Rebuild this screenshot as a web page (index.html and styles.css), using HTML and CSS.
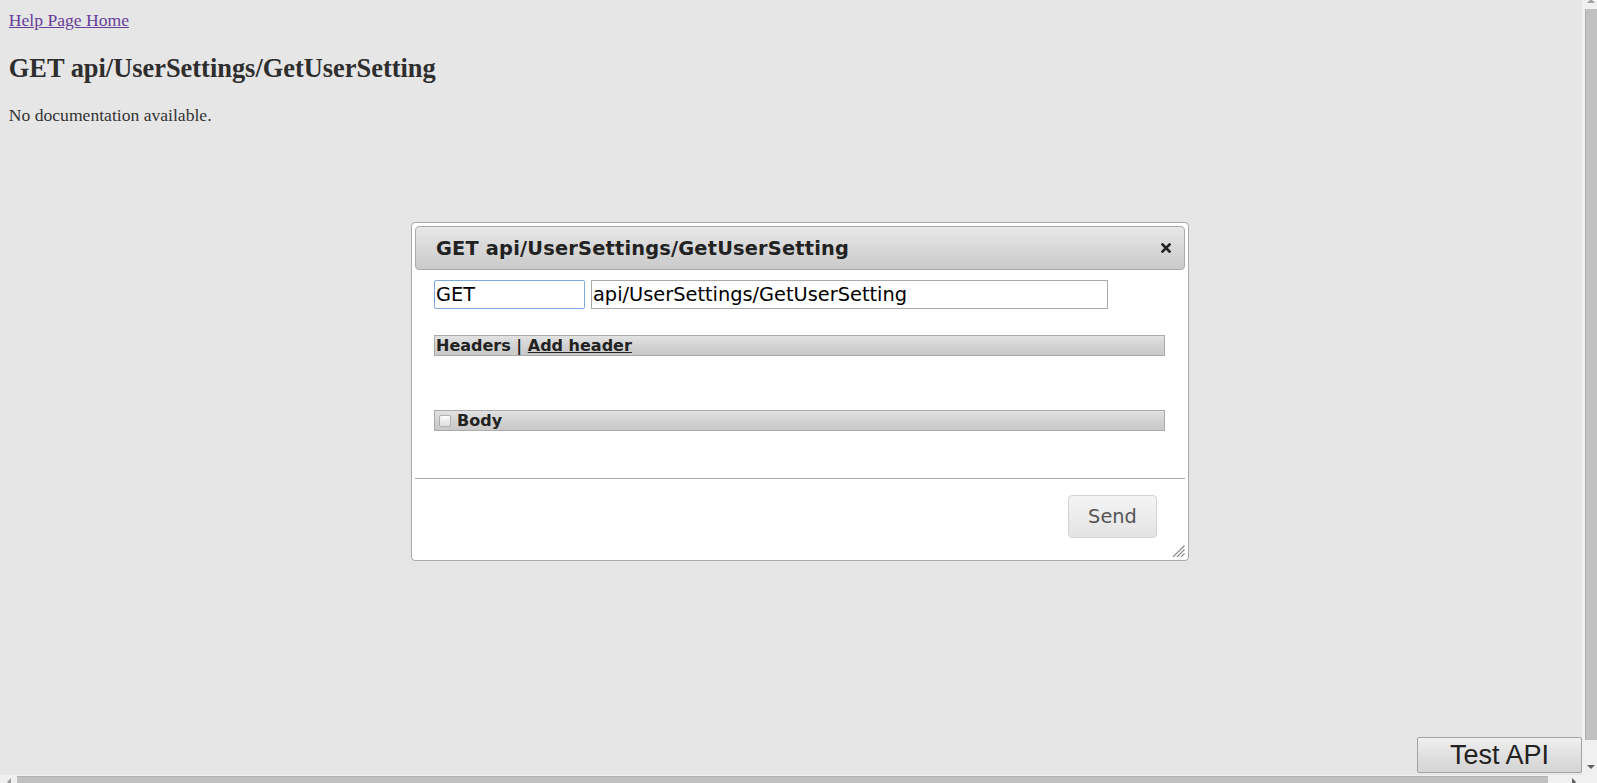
FILE: index.html
```html
<!DOCTYPE html>
<html>
<head>
<meta charset="utf-8">
<title>GET api/UserSettings/GetUserSetting</title>
<link rel="stylesheet" href="styles.css">
</head>
<body>
<div class="window">
  <main class="page">
    <div class="page-content">
      <div class="home-row"><a class="home-link" href="#">Help Page Home</a></div>
      <h2 class="api-title">GET api/UserSettings/GetUserSetting</h2>
      <p class="api-doc">No documentation available.</p>
    </div>

    <div class="dialog">
      <div class="dialog-titlebar">
        <span class="dialog-title">GET api/UserSettings/GetUserSetting</span>
        <span class="dialog-close" aria-label="close">
          <svg width="10" height="10" viewBox="0 0 10 10"><path d="M1.5 1.5 L8.5 8.5 M8.5 1.5 L1.5 8.5" stroke="#222" stroke-width="2.6" stroke-linecap="square" fill="none"/></svg>
        </span>
      </div>
      <div class="dialog-content">
        <div class="request-line">
          <input class="text-input method-input" type="text" value="GET">
          <input class="text-input url-input" type="text" value="api/UserSettings/GetUserSetting">
        </div>
        <div class="section-bar headers-bar">Headers | <a class="add-header" href="#">Add header</a></div>
        <div class="section-bar body-bar"><span class="checkbox"></span>Body</div>
      </div>
      <div class="dialog-buttonpane">
        <button class="send-btn" type="button">Send</button>
      </div>
      <svg class="resize-handle" width="13" height="12" viewBox="0 0 13 12">
        <path d="M12.5 0.5 L1 12 M12.5 4.5 L5 12 M12.5 8.5 L9 12" stroke="#8a8a8a" stroke-width="1.2" fill="none"/>
      </svg>
    </div>

    <button class="test-api" type="button">Test API</button>
  </main>

  <div class="vscroll">
    <div class="arrow-cell arrow-up"><span class="tri tri-up"></span></div>
    <div class="vthumb"></div>
    <div class="vspacer"></div>
    <div class="arrow-cell arrow-down"><span class="tri tri-down"></span></div>
  </div>
  <div class="hscroll">
    <div class="harrow"><span class="tri tri-left"></span></div>
    <div class="hthumb"></div>
    <div class="hspacer"></div>
    <div class="harrow"><span class="tri tri-right"></span></div>
  </div>
  <div class="corner"></div>
</div>
</body>
</html>
```

FILE: styles.css
```css
html, body {
  margin: 0;
  padding: 0;
}

body {
  background: #e6e6e6;
}

.window {
  display: grid;
  grid-template-columns: 1582px 15px;
  grid-template-rows: 775px 8px;
  width: 1597px;
  height: 783px;
  overflow: hidden;
}

/* ---------- page ---------- */
.page {
  position: relative;
  overflow: hidden;
  background: #e6e6e6;
  font-family: "Liberation Serif", "Times New Roman", serif;
  font-size: 17.6px;
  color: #333;
}

.page-content {
  padding: 10px 8.8px 9px;
}

.home-link {
  color: #663f99;
  text-decoration: underline;
}

.api-title {
  font-size: 26.4px;
  font-weight: bold;
  margin: 21.9px 0 20.9px;
  color: #2e2e2e;
}

.api-doc {
  margin: 17.6px 0;
}

/* ---------- dialog ---------- */
.dialog {
  position: absolute;
  left: 411px;
  top: 222px;
  width: 778px;
  box-sizing: border-box;
  border: 1px solid #aaa;
  border-radius: 4px;
  background: #fff;
  padding: 3px;
  display: flex;
  flex-direction: column;
  font-family: "DejaVu Sans", Verdana, sans-serif;
  font-size: 19.36px;
  color: #222;
}

.dialog-titlebar {
  height: 44px;
  box-sizing: border-box;
  border: 1px solid #aaa;
  border-radius: 4px;
  background: linear-gradient(#e8e8e8, #d8d8d8 50%, #cacaca);
  display: flex;
  align-items: center;
  justify-content: space-between;
  padding: 0 13px 0 20px;
}

.dialog-title {
  font-weight: bold;
  letter-spacing: 0.2px;
  color: #222;
}

.dialog-close {
  display: flex;
  width: 10px;
  height: 10px;
}

.dialog-content {
  padding: 10px 20px 0 19px;
  display: flex;
  flex-direction: column;
}

.request-line {
  display: flex;
  gap: 6px;
}

.text-input {
  height: 29px;
  box-sizing: border-box;
  border: 1px solid #a9a9a9;
  padding: 0 2px 0 1px;
  margin: 0;
  font-family: inherit;
  font-size: 19.36px;
  color: #000;
  background: #fff;
  outline: none;
}

.method-input {
  width: 151px;
  border-color: #7fa9e3;
  border-radius: 2px;
}

.url-input {
  width: 517px;
}

.section-bar {
  height: 21px;
  box-sizing: border-box;
  border: 1px solid #aaa;
  background: linear-gradient(#e2e2e2, #d0d0d0 60%, #c9c9c9);
  font-size: 16px;
  font-weight: bold;
  line-height: 19px;
  padding-left: 1px;
  color: #222;
}

.headers-bar {
  margin-top: 26px;
}

.add-header {
  color: #222;
  text-decoration: underline;
}

.body-bar {
  margin-top: 54px;
  display: flex;
  align-items: center;
  padding-left: 4px;
}

.checkbox {
  width: 12px;
  height: 12px;
  box-sizing: border-box;
  border: 1px solid #b0b0b0;
  border-radius: 2px;
  background: linear-gradient(#fcfcfc, #dedede);
  margin-right: 6px;
}

.dialog-buttonpane {
  margin-top: 47px;
  border-top: 1px solid #aaa;
  padding: 16px 28px 19px 0;
  display: flex;
  justify-content: flex-end;
}

.send-btn {
  width: 89px;
  height: 43px;
  box-sizing: border-box;
  border: 1px solid #d3d3d3;
  border-radius: 4px;
  background: linear-gradient(#f4f4f4, #ececec 50%, #e3e3e3);
  font-family: "DejaVu Sans", Verdana, sans-serif;
  font-size: 19.36px;
  color: #555;
  padding: 0;
}

.resize-handle {
  position: absolute;
  right: 3px;
  bottom: 3px;
}

/* ---------- floating Test API button ---------- */
.test-api {
  position: absolute;
  right: 0;
  bottom: 2px;
  width: 165px;
  height: 36px;
  box-sizing: border-box;
  border: 1px solid #a3a3a3;
  border-radius: 2px;
  background: linear-gradient(#f0f0f0, #e0e0e0 50%, #d4d4d4);
  font-family: "Liberation Sans", Arial, sans-serif;
  font-size: 27px;
  color: #222;
  padding: 0;
  line-height: 34px;
}

/* ---------- scrollbars ---------- */
.vscroll {
  background: #f0f0f0;
  display: flex;
  flex-direction: column;
}

.arrow-cell {
  display: flex;
  justify-content: center;
  padding-left: 3px;
}

.arrow-up {
  height: 9px;
  align-items: flex-start;
}

.vthumb {
  height: 731px;
  margin-left: 3px;
  background: #c1c1c1;
  border-left: 1px solid #b0b0b0;
}

.vspacer {
  flex: 1;
}

.arrow-down {
  height: 17px;
  align-items: center;
}

.tri {
  width: 0;
  height: 0;
  display: block;
}

.tri-up {
  border-left: 4px solid transparent;
  border-right: 4px solid transparent;
  border-bottom: 4px solid #a0a0a0;
  margin-top: -1px;
}

.tri-down {
  border-left: 4px solid transparent;
  border-right: 4px solid transparent;
  border-top: 4px solid #606060;
}

.hscroll {
  background: #f0f0f0;
  display: flex;
}

.harrow {
  width: 17px;
  display: flex;
  justify-content: center;
  align-items: flex-end;
}

.tri-left {
  border-top: 4px solid transparent;
  border-bottom: 4px solid transparent;
  border-right: 4px solid #a0a0a0;
  margin-bottom: -3px;
}

.tri-right {
  border-top: 4px solid transparent;
  border-bottom: 4px solid transparent;
  border-left: 4px solid #606060;
  margin-bottom: -3px;
}

.hthumb {
  width: 1531px;
  margin-top: 1px;
  background: #c1c1c1;
  border-top: 1px solid #b0b0b0;
}

.hspacer {
  flex: 1;
}

.corner {
  background: #f0f0f0;
}
```
